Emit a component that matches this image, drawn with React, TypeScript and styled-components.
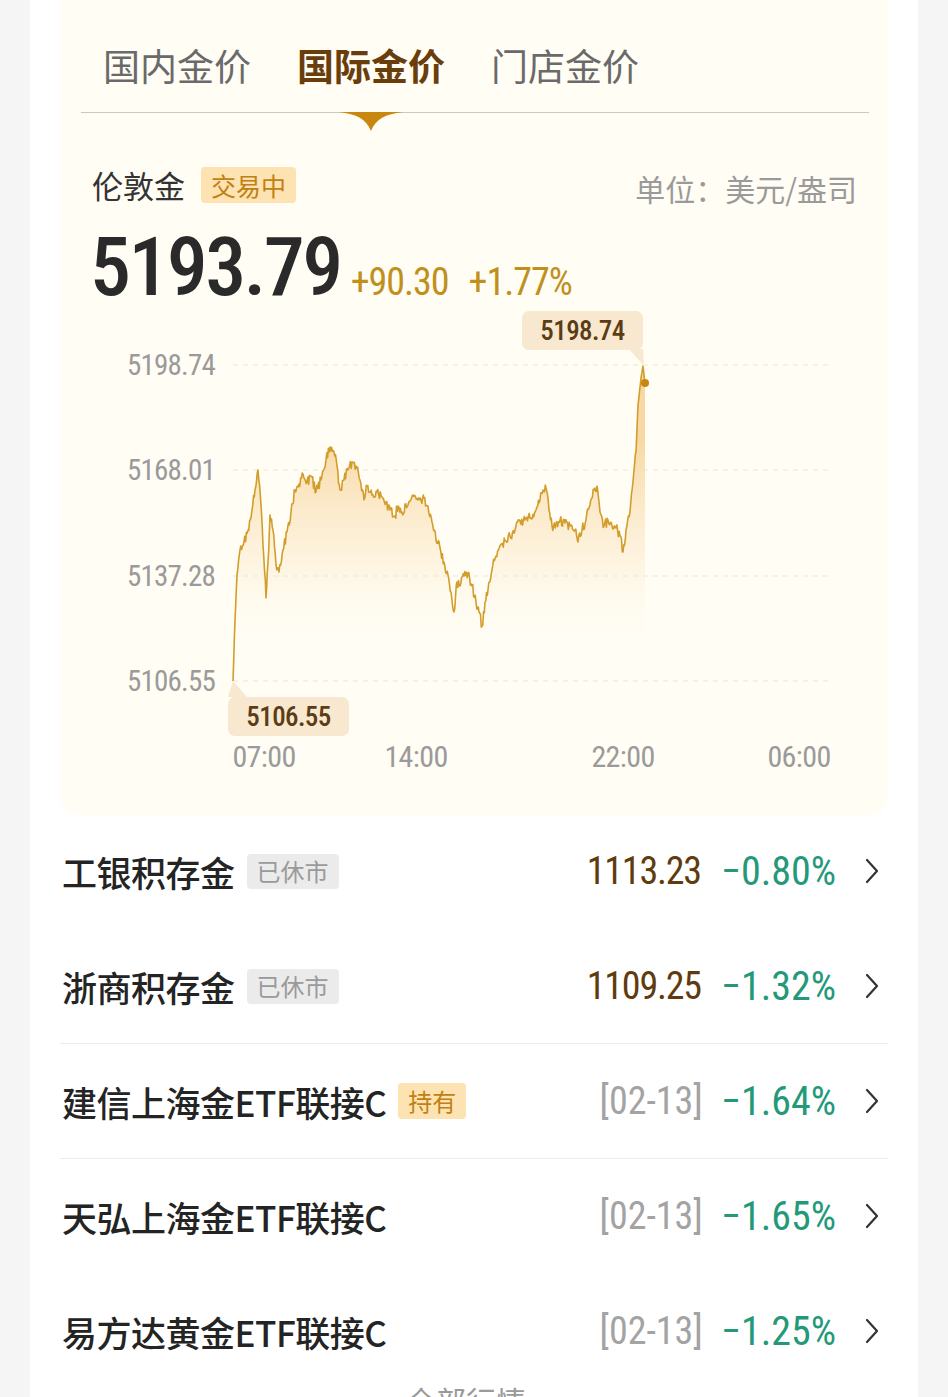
import React from "react";
import styled, { createGlobalStyle } from "styled-components";

const CJK = `"Noto Sans CJK SC", "Noto Sans", sans-serif`;
const NUM = `"Roboto Condensed", "Roboto", "Noto Sans CJK SC", sans-serif`;

const Global = createGlobalStyle`
  html, body { margin: 0; padding: 0; background: #f5f5f5; }
  body { font-family: ${CJK}; }
  * { box-sizing: border-box; }
`;

const Page = styled.div`
  height: 1397px;
  overflow: hidden;
`;

const Card = styled.div`
  margin: 0 30px;
  background: #ffffff;
  padding: 0 30px;
  min-height: 1397px;
`;

const Panel = styled.section`
  background: #fffdf4;
  border-radius: 0 0 18px 18px;
  padding: 0 31px 41px 0;
  display: flex;
  flex-direction: column;
`;

const Tabs = styled.nav`
  display: flex;
  gap: 46px;
  padding: 43px 0 0 43px;
`;

const Tab = styled.div<{ $active?: boolean }>`
  font-family: ${CJK};
  font-size: 37px;
  line-height: 44px;
  font-weight: ${(p) => (p.$active ? 700 : 400)};
  color: ${(p) => (p.$active ? "#6a3e0c" : "#6a6a6a")};
`;

const TabLine = styled.div`
  position: relative;
  margin: 25px -12px 0 21px;
  height: 1px;
  background: #cfc9bb;
`;

const Indicator = styled.svg`
  position: absolute;
  left: 258px;
  top: 0;
`;

const Header = styled.div`
  display: flex;
  align-items: center;
  justify-content: space-between;
  margin-top: 52px;
  padding-left: 32px;
  height: 40px;
`;

const NameGroup = styled.div`
  display: flex;
  align-items: center;
  gap: 16px;
`;

const Title = styled.span`
  font-size: 31px;
  color: #333;
  line-height: 40px;
`;

const Tag = styled.span<{ $kind: "gold" | "gray" }>`
  display: inline-flex;
  align-items: center;
  height: ${(p) => (p.$kind === "gold" ? 36 : 35)}px;
  padding: 0 10px;
  border-radius: 4px;
  font-size: 24px;
  line-height: 1;
  background: ${(p) => (p.$kind === "gold" ? "#fde3b2" : "#ebebeb")};
  color: ${(p) => (p.$kind === "gold" ? "#c27f14" : "#9a9a9a")};
`;

const HeaderTag = styled(Tag)`
  font-size: 25px;
`;

const Unit = styled.span`
  font-size: 30px;
  color: #9a9a9a;
  margin-top: 6px;
`;

const PriceRow = styled.div`
  display: flex;
  align-items: baseline;
  gap: 20px;
  padding-left: 30px;
  margin-top: 21px;
  height: 82px;
`;

const BigPrice = styled.span`
  font-family: ${NUM};
  font-size: 82px;
  line-height: 82px;
  letter-spacing: -2.6px;
  color: #2a2a2a;
  font-weight: 500;
  margin-right: -10px;
`;

const Change = styled.span`
  font-family: ${NUM};
  font-size: 38px;
  letter-spacing: -1px;
  color: #c0901c;
`;

const Chart = styled.div`
  display: grid;
  grid-template-columns: 173px 597px;
  grid-template-rows: 430px 34px;
  margin-top: 2px;
`;

const YAxis = styled.div`
  display: flex;
  flex-direction: column;
  justify-content: space-between;
  align-items: flex-end;
  padding: 40px 18px 44px 0;
`;

const AxisLabel = styled.span`
  font-family: ${NUM};
  font-size: 29px;
  letter-spacing: -0.8px;
  line-height: 30px;
  color: #9a9a9a;
`;

const Plot = styled.div`
  position: relative;
`;

const PlotSvg = styled.svg`
  display: block;
  overflow: visible;
`;

const Tip = styled.div`
  position: absolute;
  height: 39px;
  width: 121px;
  border-radius: 7px;
  background: #f7e8cf;
  display: flex;
  align-items: center;
  justify-content: center;
  font-family: ${NUM};
  font-weight: 500;
  font-size: 27px;
  letter-spacing: -0.6px;
  color: #5b3c15;
`;

const XAxis = styled.div`
  grid-column: 2;
  position: relative;
`;

const XTick = styled.span`
  position: absolute;
  top: 2px;
  transform: translateX(-50%);
  font-family: ${NUM};
  font-size: 30px;
  letter-spacing: -0.6px;
  line-height: 30px;
  color: #9a9a9a;
`;

const List = styled.div`
  display: flex;
  flex-direction: column;
  margin-top: -1px;
`;

const Row = styled.div<{ $divider?: boolean }>`
  height: 115px;
  display: flex;
  align-items: center;
  justify-content: space-between;
  padding: 0 8px 0 2px;
  border-bottom: 1px solid ${(p) => (p.$divider ? "#ececec" : "transparent")};
`;

const RowLeft = styled.div`
  display: flex;
  align-items: center;
  gap: 12px;
`;

const RowName = styled.span`
  font-size: 35px;
  font-weight: 500;
  color: #242424;
  letter-spacing: -0.5px;
`;

const RowRight = styled.div`
  display: flex;
  align-items: center;
`;

const RowValue = styled.span`
  font-family: ${NUM};
  font-size: 38px;
  letter-spacing: -1.2px;
  color: #5f3b0e;
  margin-right: 20px;
`;

const RowDate = styled.span`
  font-family: ${NUM};
  font-size: 38px;
  color: #a3a3a3;
  margin-right: 18px;
`;

const RowPct = styled.span`
  font-family: ${NUM};
  font-size: 40px;
  color: #24997a;
  margin-right: 28px;
`;

const Footer = styled.div`
  margin-top: -6px;
  text-align: center;
  font-size: 30px;
  line-height: 34px;
  color: #9a9a9a;
`;

/* ---------- chart data ---------- */
const X0 = 233;
const Y0 = 310;
const KEY: [number, number][] = [
  [233, 681], [235, 620], [237, 575], [240, 550], [244, 542], [248, 530], [252, 510],
  [255, 490], [258, 470], [261, 505], [263, 545], [266, 598], [268, 562], [270, 515],
  [273, 530], [276, 565], [279, 572], [283, 550], [287, 532], [291, 512], [295, 490],
  [299, 484], [303, 474], [307, 482], [311, 476], [316, 492], [321, 480], [326, 460],
  [330, 447], [334, 452], [337, 466], [340, 490], [344, 480], [348, 470], [352, 462],
  [356, 466], [360, 480], [364, 500], [367, 486], [372, 495], [377, 492], [382, 497],
  [386, 502], [390, 510], [395, 516], [398, 506], [402, 512], [408, 505], [413, 495],
  [418, 500], [424, 498], [428, 506], [432, 522], [436, 540], [440, 548], [444, 562],
  [448, 575], [451, 592], [454, 612], [457, 582], [460, 586], [464, 576], [468, 573],
  [472, 586], [476, 602], [479, 612], [482, 626], [485, 602], [488, 590], [492, 570],
  [496, 556], [500, 546], [505, 541], [510, 536], [515, 530], [520, 521], [525, 520],
  [530, 518], [536, 510], [540, 500], [543, 490], [546, 488], [549, 510], [552, 526],
  [556, 524], [560, 520], [565, 523], [570, 526], [575, 530], [578, 542], [582, 530],
  [586, 520], [590, 505], [594, 490], [597, 486], [600, 512], [604, 526], [608, 520],
  [612, 526], [616, 528], [620, 536], [623, 552], [626, 530], [630, 512], [633, 482],
  [636, 452], [638, 405], [641, 378], [643, 366], [645, 383],
];

function buildSeries(): [number, number][] {
  let seed = 20240213;
  const rnd = () => {
    seed = (seed * 1103515245 + 12345) % 2147483648;
    return seed / 2147483648;
  };
  const pts: [number, number][] = [];
  for (let i = 0; i < KEY.length - 1; i++) {
    const [xa, ya] = KEY[i];
    const [xb, yb] = KEY[i + 1];
    const steps = Math.max(1, Math.round((xb - xa) / 0.8));
    for (let s = 0; s < steps; s++) {
      const t = s / steps;
      const x = xa + (xb - xa) * t;
      let y = ya + (yb - ya) * t;
      const quiet = x < 236 || x > 636;
      if (!quiet && s > 0) y += (rnd() - 0.5) * 10;
      pts.push([x - X0, y - Y0]);
    }
  }
  const last = KEY[KEY.length - 1];
  pts.push([last[0] - X0, last[1] - Y0]);
  return pts;
}

const SERIES = buildSeries();
const LINE = SERIES.map(([x, y], i) => `${i ? "L" : "M"}${x.toFixed(1)} ${y.toFixed(1)}`).join(" ");
const AREA = `${LINE} L${SERIES[SERIES.length - 1][0].toFixed(1)} 360 L0 360 Z`;

const GRID = [365, 470, 576, 681];
const YLABELS = ["5198.74", "5168.01", "5137.28", "5106.55"];
const XTICKS: { label: string; x: number }[] = [
  { label: "07:00", x: 264 },
  { label: "14:00", x: 416 },
  { label: "22:00", x: 623 },
  { label: "06:00", x: 799 },
];

function Chevron() {
  return (
    <svg width="16" height="28" viewBox="0 0 16 28">
      <polyline points="3,3 13,14 3,25" fill="none" stroke="#333" strokeWidth="2.2" strokeLinecap="round" strokeLinejoin="round" />
    </svg>
  );
}

type RowData = {
  name: string;
  tag?: { text: string; kind: "gold" | "gray" };
  value?: string;
  date?: string;
  pct: string;
  divider?: boolean;
};

const ROWS: RowData[] = [
  { name: "工银积存金", tag: { text: "已休市", kind: "gray" }, value: "1113.23", pct: "−0.80%" },
  { name: "浙商积存金", tag: { text: "已休市", kind: "gray" }, value: "1109.25", pct: "−1.32%", divider: true },
  { name: "建信上海金ETF联接C", tag: { text: "持有", kind: "gold" }, date: "[02-13]", pct: "−1.64%", divider: true },
  { name: "天弘上海金ETF联接C", date: "[02-13]", pct: "−1.65%" },
  { name: "易方达黄金ETF联接C", date: "[02-13]", pct: "−1.25%" },
];

export default function App() {
  return (
    <Page>
      <Global />
      <Card>
        <Panel>
          <Tabs>
            <Tab>国内金价</Tab>
            <Tab $active>国际金价</Tab>
            <Tab>门店金价</Tab>
          </Tabs>
          <TabLine>
            <Indicator width="64" height="19" viewBox="0 0 64 19">
              <path d="M0 0 H64 C46 2 37 7 32 19 C27 7 18 2 0 0 Z" fill="#c8870f" />
            </Indicator>
          </TabLine>
          <Header>
            <NameGroup>
              <Title>伦敦金</Title>
              <HeaderTag $kind="gold">交易中</HeaderTag>
            </NameGroup>
            <Unit>单位：美元/盎司</Unit>
          </Header>
          <PriceRow>
            <BigPrice>5193.79</BigPrice>
            <Change>+90.30</Change>
            <Change>+1.77%</Change>
          </PriceRow>
          <Chart>
            <YAxis>
              {YLABELS.map((l) => (
                <AxisLabel key={l}>{l}</AxisLabel>
              ))}
            </YAxis>
            <Plot>
              <PlotSvg width="597" height="430" viewBox="0 0 597 430">
                <defs>
                  <linearGradient id="fillGrad" gradientUnits="userSpaceOnUse" x1="0" y1="130" x2="0" y2="340">
                    <stop offset="0" stopColor="#f6d296" stopOpacity="0.85" />
                    <stop offset="0.55" stopColor="#fbe6c2" stopOpacity="0.45" />
                    <stop offset="1" stopColor="#fffdf4" stopOpacity="0" />
                  </linearGradient>
                </defs>
                {GRID.map((g) => (
                  <line key={g} x1="0" x2="597" y1={g - Y0} y2={g - Y0} stroke="#ebe6da" strokeWidth="1.2" strokeDasharray="5 5" />
                ))}
                <path d={AREA} fill="url(#fillGrad)" />
                <path d={LINE} fill="none" stroke="#d39d2c" strokeWidth="1.6" strokeLinejoin="round" />
                <polygon points="396,39 410,39 411,56" fill="#f7e8cf" />
                <polygon points="0,371 -5,387 14,387" fill="#f7e8cf" />
                <circle cx={645 - X0} cy={383 - Y0} r="4" fill="#c8870f" />
              </PlotSvg>
              <Tip style={{ left: 289, top: 1 }}>5198.74</Tip>
              <Tip style={{ left: -5, top: 387 }}>5106.55</Tip>
            </Plot>
            <XAxis>
              {XTICKS.map((t) => (
                <XTick key={t.label} style={{ left: t.x - X0 }}>
                  {t.label}
                </XTick>
              ))}
            </XAxis>
          </Chart>
        </Panel>
        <List>
          {ROWS.map((r) => (
            <Row key={r.name} $divider={r.divider}>
              <RowLeft>
                <RowName>{r.name}</RowName>
                {r.tag && <Tag $kind={r.tag.kind}>{r.tag.text}</Tag>}
              </RowLeft>
              <RowRight>
                {r.value && <RowValue>{r.value}</RowValue>}
                {r.date && <RowDate>{r.date}</RowDate>}
                <RowPct>{r.pct}</RowPct>
                <Chevron />
              </RowRight>
            </Row>
          ))}
        </List>
        <Footer>全部行情 ›</Footer>
      </Card>
    </Page>
  );
}
